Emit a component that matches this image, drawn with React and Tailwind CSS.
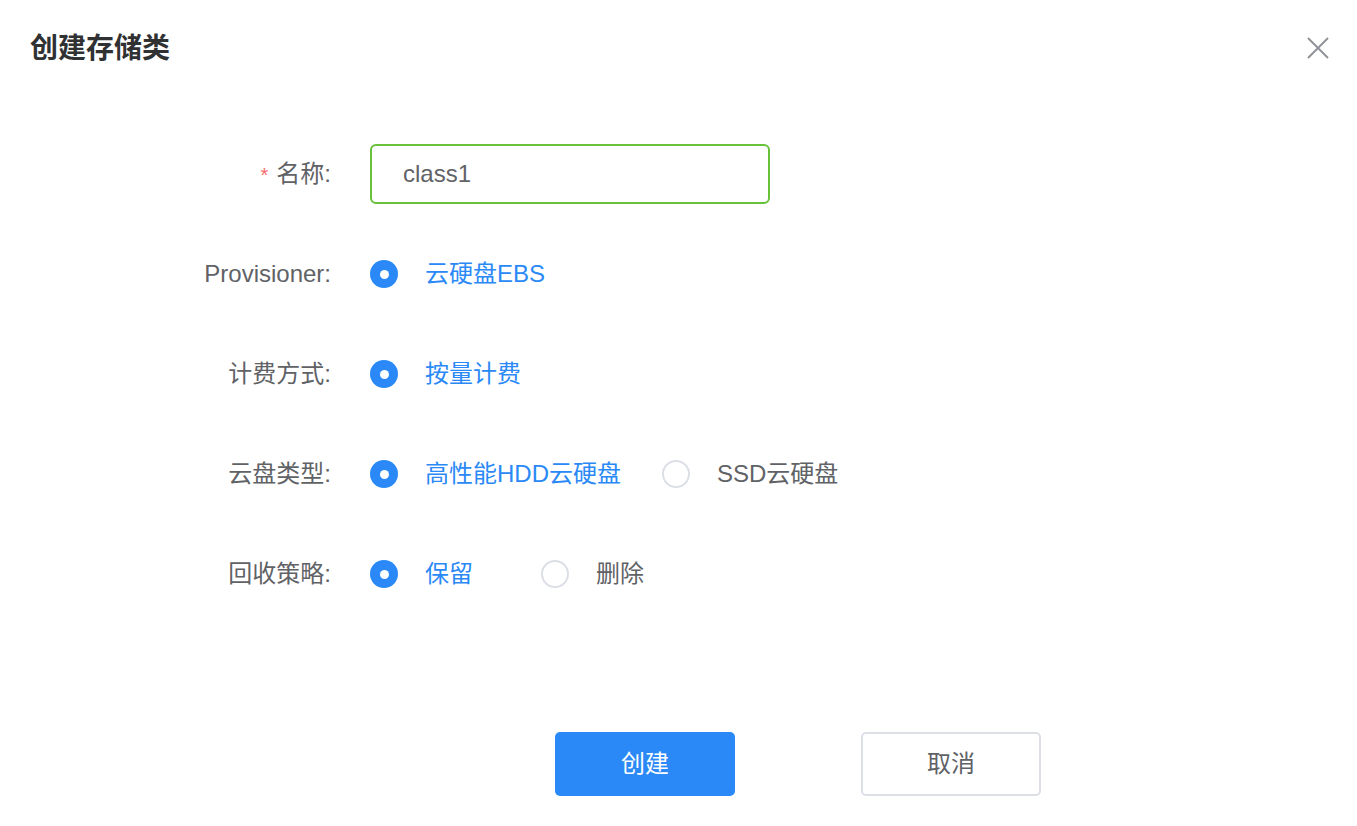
import React from "react";

const font = { fontFamily: '"Liberation Sans", "Noto Sans CJK SC", sans-serif' };

function Radio({ checked, label, mr = 0 }) {
  return (
    <div className="flex items-center" style={{ marginRight: mr }}>
      {checked ? (
        <span className="flex h-[28px] w-[28px] items-center justify-center rounded-full bg-[#2a89f6]">
          <span className="h-[9px] w-[9px] rounded-full bg-white" />
        </span>
      ) : (
        <span className="h-[28px] w-[28px] rounded-full border-2 border-[#dcdfe6] bg-white" />
      )}
      <span className={`ml-[27px] text-[24px] leading-none ${checked ? "text-[#2a89f6]" : "text-[#606266]"}`}>
        {label}
      </span>
    </div>
  );
}

function Row({ label, required, children }) {
  return (
    <div className="flex h-[60px] items-center">
      <div className="w-[331px] pr-0 text-right text-[24px] leading-none text-[#606266]">
        {required && <span className="mr-[8px] text-[20px] text-[#f56c6c]">*</span>}
        {label}:
      </div>
      <div className="ml-[39px] flex items-center">{children}</div>
    </div>
  );
}

export default function App() {
  return (
    <div className="relative h-[826px] w-[1357px] bg-white" style={font}>
      <div className="flex items-center justify-between pl-[30px] pr-[28px] pt-[29px]">
        <h1 className="text-[28px] font-bold leading-[40px] text-[#303133]">创建存储类</h1>
        <svg width="22" height="22" viewBox="0 0 22 22" className="mt-[-2px]">
          <path d="M1 1 L21 21 M21 1 L1 21" stroke="#909399" strokeWidth="2" />
        </svg>
      </div>

      <div className="mt-[75px] flex flex-col gap-[40px]">
        <Row label="名称" required>
          <div className="flex h-[60px] w-[400px] items-center rounded-[6px] border-2 border-[#67c23a] pl-[31px] text-[24px] text-[#606266]">
            class1
          </div>
        </Row>
        <Row label="Provisioner">
          <Radio checked label="云硬盘EBS" />
        </Row>
        <Row label="计费方式">
          <Radio checked label="按量计费" />
        </Row>
        <Row label="云盘类型">
          <Radio checked label="高性能HDD云硬盘" mr={41} />
          <Radio label="SSD云硬盘" />
        </Row>
        <Row label="回收策略">
          <Radio checked label="保留" mr={68} />
          <Radio label="删除" />
        </Row>
      </div>

      <div className="mt-[128px] flex pl-[555px]">
        <button className="flex h-[64px] w-[180px] items-center justify-center rounded-[5px] bg-[#2a89f6] text-[24px] text-white">
          创建
        </button>
        <button className="ml-[126px] flex h-[64px] w-[180px] items-center justify-center rounded-[5px] border-2 border-[#dcdfe6] bg-white text-[24px] text-[#606266]">
          取消
        </button>
      </div>
    </div>
  );
}
